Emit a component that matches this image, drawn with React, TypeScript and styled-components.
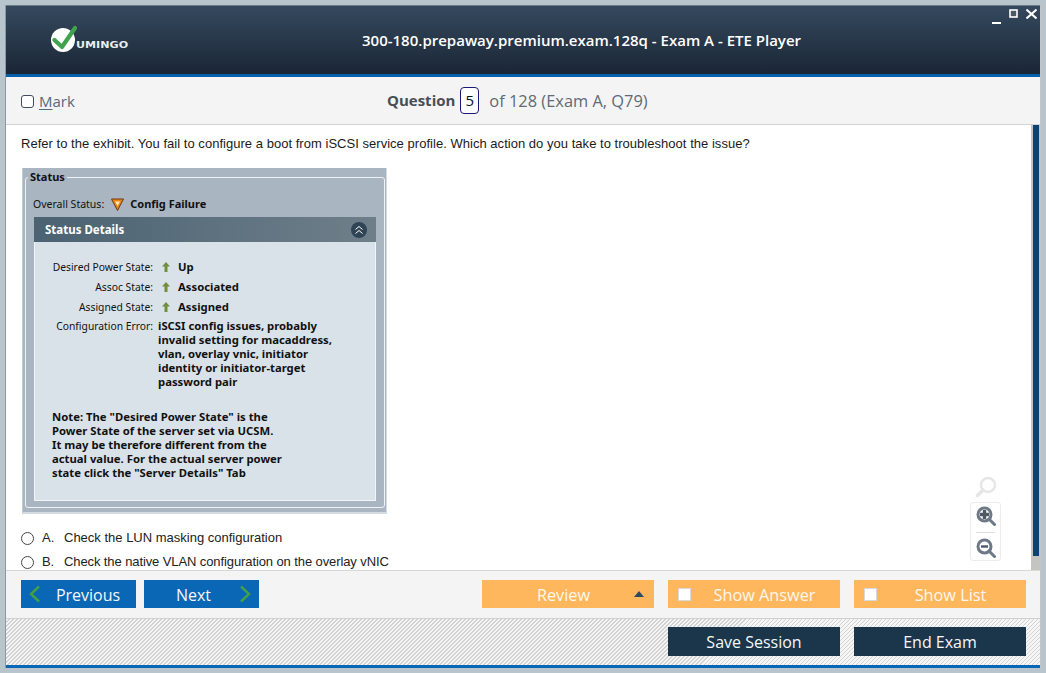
import React from "react";
import styled, { createGlobalStyle } from "styled-components";

const Global = createGlobalStyle`
  html, body { margin: 0; padding: 0; height: 100%; overflow: hidden; background: #b8c5cc; }
  #root { height: 100%; }
  * { box-sizing: border-box; }
`;

const Page = styled.div`
  width: 1046px; height: 673px; padding: 5px 5px 5px 5px; background: #b8c5cc;
  font-family: "Open Sans", sans-serif;
`;
const Win = styled.div`
  width: 1036px; height: 663px; display: flex; flex-direction: column; background: #f4f4f4;
  border-left: 1px solid #8a9aa4; border-right: 1px solid #c4c6c6;
`;
const TitleBar = styled.header`
  height: 72px; flex: none; position: relative; display: flex; align-items: center;
  background: linear-gradient(#35495e, #1a2636); border-top: 1px solid #6d7a85;
  border-bottom: 3px solid #0560ad;
`;
const Logo = styled.div`
  position: absolute; left: 44px; top: 19px; display: flex; align-items: flex-end;
`;
const LogoWord = styled.span`
  font: bold 9.5px/10px "DejaVu Sans", sans-serif; color: #e8eef0;
  margin-left: -1px; margin-bottom: 2px; transform: scaleX(1.17); transform-origin: left bottom;
`;
const Title = styled.h1`
  flex: 1; margin: 0 0 1px 0; padding-left: 117px; text-align: center; font: 600 15px/20px "Open Sans", sans-serif; color: #fff;
`;
const WinButtons = styled.div`
  position: absolute; right: 3px; top: 3px; display: flex; align-items: flex-start; gap: 8px;
`;
const MarkBar = styled.div`
  height: 48px; flex: none; display: flex; align-items: center; position: relative;
  border-bottom: 1px solid #d3d3d3; padding-left: 15px;
`;
const MarkLabel = styled.label`
  display: flex; align-items: center; gap: 5px; font-size: 15px; color: #566a7c;
  u { text-decoration-thickness: 1px; text-underline-offset: 2px; }
`;
const MarkBox = styled.span`
  width: 13px; height: 13px; margin-top: 2px; border: 1px solid #3e4e60; border-radius: 3px; background: #fff; display: block;
`;
const QuestionNo = styled.div`
  position: absolute; left: 381px; top: 9px; display: flex; align-items: center; font-size: 16.4px; color: #5f6a75; height: 28px;
  b { font-weight: 700; font-size: 15px; color: #484e56; }
`;
const NumBox = styled.span`
  width: 19px; height: 27px; margin: 0 10px 0 5px; border: 1px solid #1a1a7a; border-radius: 4px;
  background: #fff; color: #111; display: flex; align-items: center; justify-content: center; font-size: 15px;
`;
const Main = styled.main`
  height: 445px; flex: none; display: flex; background: #fff; position: relative; overflow: hidden;
`;
const Scroll = styled.div`
  flex: 1; overflow: hidden; padding: 12px 0 0 15px;
`;
const Track = styled.div`
  width: 9px; flex: none; background: #c4c4c0; padding: 0 1px 14px 2px;
`;
const Thumb = styled.div`
  width: 6px; height: 100%; background: #0d4273;
`;
const QText = styled.p`
  margin: 0 0 17px; font: 13px/14px "Liberation Sans", Arial, sans-serif; color: #1a1a1a; height: 14px; letter-spacing: 0.03px; white-space: nowrap;
`;
const Exhibit = styled.figure`
  margin: 0 0 0 1px; width: 365px; height: 346px; background: #a9b5c1; padding: 2px 2px 0;
  border-bottom: 2px solid #d4dbe0; border-right: 1px solid #d4dbe0; border-left: 1px solid #c4ccd3;
  font: 10.3px/14px "Noto Sans", sans-serif; color: #111;
`;
const Field = styled.fieldset`
  margin: 0; padding: 14px 8px 10px 8px; height: 338px; border: 1px solid #eef2f4; border-radius: 3px;
  legend { padding: 0 2px 0 2px; margin-left: -6px; font: bold 11px/14px "Noto Sans", sans-serif; color: #111; }
`;
const Overall = styled.div`
  display: flex; align-items: center; height: 16px; margin: -2px 0 5px -1px; font: 10.5px/14px "Noto Sans", sans-serif;
  b { font-weight: 700; font-size: 11px; margin-left: 6px; }
  svg { margin-left: 7px; }
`;
const Panel = styled.section`
  width: 342px; height: 284px; display: flex; flex-direction: column;
  background: #dae2e9; border: 1px solid #f2f5f7; border-top: none;
`;
const PanelHead = styled.div`
  height: 25px; flex: none; margin: 0 -1px; display: flex; align-items: center; justify-content: space-between;
  padding: 0 9px 0 11px; background: linear-gradient(90deg, #4a6272, #6f7f8a);
  font: bold 11.5px/14px "Noto Sans", sans-serif; color: #fff;
`;
const Rows = styled.div`
  padding: 15px 0 0 0; font: 10.3px/14px "Noto Sans", sans-serif;
`;
const Row = styled.div`
  display: flex; align-items: center; height: 20px;
`;
const RowLabel = styled.span`
  width: 118px; text-align: right; white-space: nowrap;
`;
const RowIcon = styled.span`
  width: 25px; display: flex; justify-content: center;
`;
const RowValue = styled.b`
  font-weight: 700; font-size: 11.3px;
`;
const ErrRow = styled.div`
  display: flex; margin-top: 2px; align-items: flex-start;
  b { margin-left: 5px; font-size: 11.3px; font-weight: 700; white-space: pre-line; line-height: 14px; }
`;
const Note = styled.p`
  margin: 21px 0 0 17px; font-size: 11.3px; font-weight: 700; line-height: 14px; white-space: pre-line;
`;
const Answer = styled.label<{ $spacing: number }>`
  display: flex; align-items: center; height: 24px; font: 13px/14px "Liberation Sans", Arial, sans-serif; color: #222; letter-spacing: ${p => p.$spacing}px; white-space: nowrap;
  &:first-of-type { margin-top: 12px; }
`;
const Radio = styled.span`
  width: 13px; height: 13px; border: 1px solid #444; border-radius: 50%; margin: 0 8px 0 0; background: #fff; flex: none;
`;
const Letter = styled.span`
  width: 22px; flex: none;
`;
const Zoom = styled.div`
  position: absolute; right: 39px; bottom: 9px; display: flex; flex-direction: column; align-items: center;
`;
const ZoomBox = styled.div`
  width: 31px; height: 59px; margin-top: 4px; border: 1px solid #ececec; border-radius: 3px; display: flex; flex-direction: column; align-items: center; justify-content: space-between; padding: 3px 0 2px;
  hr { width: 19px; margin: 0; border: 0; border-top: 1px solid #ddd; }
`;
const Controls = styled.div`
  height: 49px; flex: none; display: flex; align-items: center; padding: 0 14px 1px 15px; border-top: 1px solid #d8d8d8; border-bottom: 1px solid #d0d0d0;
`;
const NavBtn = styled.button<{ $gap?: boolean }>`
  width: 115px; height: 28px; border: 0; padding: 0 8px; margin-right: ${p => (p.$gap ? "8px" : 0)};
  background: #0a67b5; color: #f4f8fb; font: 16px "Open Sans", sans-serif; display: flex; align-items: center; justify-content: space-between;
  span { flex: 1; text-align: center; padding-top: 2px; }
`;
const PrevText = styled.span` padding-left: 7px; `;
const NextText = styled.span` padding-right: 4px; `;
const Spacer = styled.div` flex: 1; `;
const OrangeBtn = styled.button`
  width: 172px; height: 28px; border: 0; padding: 0 10px; margin-left: 14px; background: #ffb75d; color: #fff8ee;
  font: 16.3px "Open Sans", sans-serif; display: flex; align-items: center;
  span { flex: 1; text-align: center; padding: 2px 0 0 1px; }
  i + span { padding-left: 8px; }
`;
const Check = styled.i`
  width: 13px; height: 13px; background: #fff; border: 1px solid #d9d9d9; display: block; flex: none;
`;
const Caret = styled.i`
  width: 0; height: 0; border-left: 5px solid transparent; border-right: 5px solid transparent; border-bottom: 6px solid #2e4a62; display: block; flex: none;
`;
const Bottom = styled.footer`
  flex: 1; display: flex; justify-content: flex-end; align-items: flex-start; gap: 14px; padding: 8px 14px 0 0;
  background: repeating-linear-gradient(135deg, #f6f6f6 0 1.83px, #d2d2d2 1.83px 2.83px);
  border-bottom: 3px solid #0a67b5;
`;
const DarkBtn = styled.button`
  width: 172px; height: 29px; border: 0; background: #1b354b; color: #f6f8fa; font: 16px "Open Sans", sans-serif;
`;

const GlassOff = () => (
  <svg width="22" height="22" viewBox="0 0 22 22" fill="none">
    <circle cx="13" cy="9" r="7" stroke="#e6e6e6" strokeWidth="2.5" />
    <path d="M8 14 2.5 19.5" stroke="#e6e6e6" strokeWidth="3.5" strokeLinecap="round" />
  </svg>
);
const Glass = ({ plus }: { plus?: boolean }) => (
  <svg width="20" height="20" viewBox="0 0 20 20" fill="none">
    <circle cx="8.5" cy="8.5" r="6.5" stroke="#6d7986" strokeWidth="3" />
    <path d="M13 13 18.5 18.5" stroke="#6d7986" strokeWidth="3" strokeLinecap="round" />
    <path d={plus ? "M4 8.5h9M8.5 4v9" : "M5 8.5h7"} stroke="#4e5965" strokeWidth={plus ? 3.4 : 2.4} />
  </svg>
);
const Up = () => (
  <svg width="8" height="10" viewBox="0 0 8 10"><path d="M4 0 8 4.5H5.5V10h-3V4.5H0Z" fill="#6f8f3a" /></svg>
);
const Chev = ({ right }: { right?: boolean }) => (
  <svg width="12" height="18" viewBox="0 0 12 18" fill="none">
    <path d={right ? "M2 1.5 10 9 2 16.5" : "M10 1.5 2 9 10 16.5"} stroke="#43a047" strokeWidth="2.4" />
  </svg>
);

export default function App() {
  return (
    <Page>
      <Global />
      <Win>
        <TitleBar>
          <Logo>
            <svg width="27" height="27" viewBox="0 0 27 27">
              <circle cx="13" cy="15" r="12" fill="#fff" />
              <path d="M4.5 15 12 22 25 3" fill="none" stroke="#3fa34d" strokeWidth="4.2" strokeLinecap="round" strokeLinejoin="round" />
            </svg>
            <LogoWord>UMINGO</LogoWord>
          </Logo>
          <Title>300-180.prepaway.premium.exam.128q - Exam A - ETE Player</Title>
          <WinButtons>
            <svg width="9" height="9" viewBox="0 0 9 9" style={{ marginTop: 7 }}><rect y="6" width="9" height="2" fill="#fff" /></svg>
            <svg width="9" height="9" viewBox="0 0 9 9"><rect x="1" y="1" width="7" height="7" fill="#4a5866" stroke="#fff" strokeWidth="1.6" /></svg>
            <svg width="11" height="10" viewBox="0 0 11 10"><path d="M.5.5 10.5 9.5M10.5.5.5 9.5" stroke="#fff" strokeWidth="2" /></svg>
          </WinButtons>
        </TitleBar>
        <MarkBar>
          <MarkLabel><MarkBox /><span><u>M</u>ark</span></MarkLabel>
          <QuestionNo><b>Question</b><NumBox>5</NumBox>of 128 (Exam A, Q79)</QuestionNo>
        </MarkBar>
        <Main>
          <Scroll>
            <QText>Refer to the exhibit. You fail to configure a boot from iSCSI service profile. Which action do you take to troubleshoot the issue?</QText>
            <Exhibit>
              <Field>
                <legend>Status</legend>
                <Overall>
                  Overall Status:
                  <svg width="13" height="13" viewBox="0 0 13 13"><path d="M.5 1h12L6.5 12.5Z" fill="#e8861a" stroke="#6b3a10" /><path d="M4 3.5h5L6.5 8Z" fill="#ffe9a8" /></svg>
                  <b>Config Failure</b>
                </Overall>
                <Panel>
                  <PanelHead>
                    Status Details
                    <svg width="16" height="16" viewBox="0 0 16 16" fill="none"><circle cx="8" cy="8" r="8" fill="#2f4454" /><path d="M4.5 7.5 8 4.5l3.5 3M4.5 11.5 8 8.5l3.5 3" stroke="#fff" /></svg>
                  </PanelHead>
                  <Rows>
                    <Row><RowLabel>Desired Power State:</RowLabel><RowIcon><Up /></RowIcon><RowValue>Up</RowValue></Row>
                    <Row><RowLabel>Assoc State:</RowLabel><RowIcon><Up /></RowIcon><RowValue>Associated</RowValue></Row>
                    <Row><RowLabel>Assigned State:</RowLabel><RowIcon><Up /></RowIcon><RowValue>Assigned</RowValue></Row>
                    <ErrRow>
                      <RowLabel>Configuration Error:</RowLabel>
                      <b>{"iSCSI config issues, probably\ninvalid setting for macaddress,\nvlan, overlay vnic, initiator\nidentity or initiator-target\npassword pair"}</b>
                    </ErrRow>
                    <Note>{"Note: The \"Desired Power State\" is the\nPower State of the server set via UCSM.\nIt may be therefore different from the\nactual value. For the actual server power\nstate click the \"Server Details\" Tab"}</Note>
                  </Rows>
                </Panel>
              </Field>
            </Exhibit>
            <Answer $spacing={0}><Radio /><Letter>A.</Letter>Check the LUN masking configuration</Answer>
            <Answer $spacing={-0.1}><Radio /><Letter>B.</Letter>Check the native VLAN configuration on the overlay vNIC</Answer>
          </Scroll>
          <Zoom>
            <GlassOff />
            <ZoomBox><Glass plus /><hr /><Glass /></ZoomBox>
          </Zoom>
          <Track><Thumb /></Track>
        </Main>
        <Controls>
          <NavBtn $gap><Chev /><PrevText>Previous</PrevText></NavBtn>
          <NavBtn><NextText>Next</NextText><Chev right /></NavBtn>
          <Spacer />
          <OrangeBtn><span>Review</span><Caret /></OrangeBtn>
          <OrangeBtn><Check /><span>Show Answer</span></OrangeBtn>
          <OrangeBtn><Check /><span>Show List</span></OrangeBtn>
        </Controls>
        <Bottom>
          <DarkBtn>Save Session</DarkBtn>
          <DarkBtn>End Exam</DarkBtn>
        </Bottom>
      </Win>
    </Page>
  );
}
